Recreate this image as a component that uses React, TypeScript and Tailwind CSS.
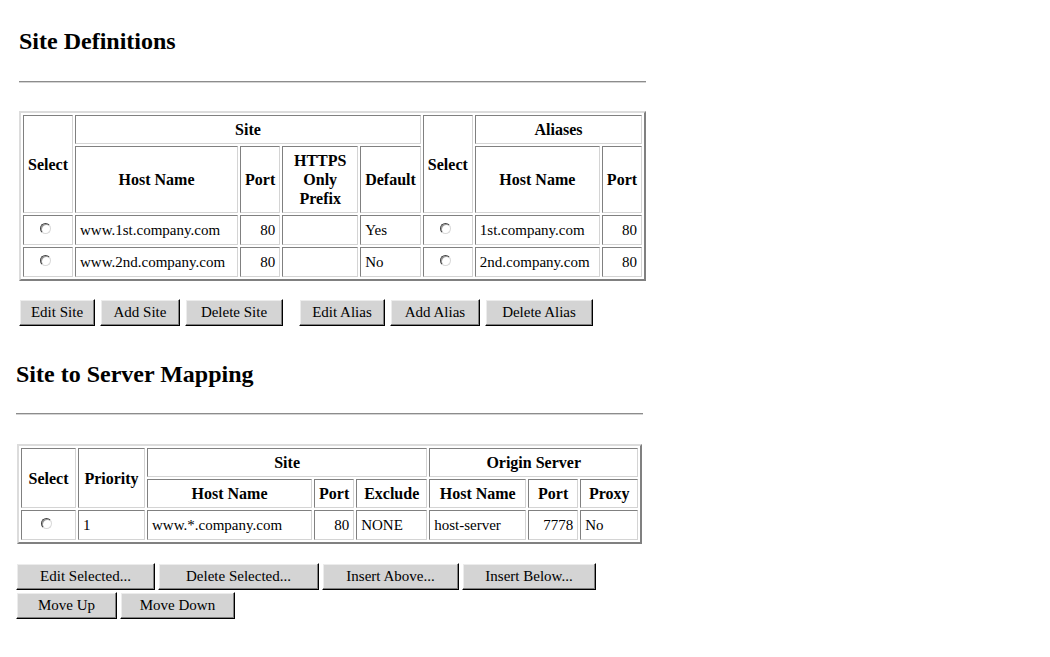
import React from 'react'

const thCls =
  'border border-t-[#808080] border-l-[#808080] border-b-[#d4d4d4] border-r-[#d4d4d4] p-[4px] font-bold text-[16px] leading-[19px] text-center align-middle'
const tdCls =
  'border border-t-[#808080] border-l-[#808080] border-b-[#d4d4d4] border-r-[#d4d4d4] px-[4px] py-0 text-[15px] leading-[19px] whitespace-nowrap align-middle h-[30px]'
const tableCls =
  'border-separate border-spacing-[2px] border-2 border-t-[#dcdcdc] border-l-[#dcdcdc] border-b-[#808080] border-r-[#808080]'
const btnCls =
  'h-[27px] bg-[#d4d4d4] border border-t-white border-l-white border-b-black border-r-black shadow-[inset_-1px_-1px_0_#808080,inset_1px_1px_0_#ececec] text-[15px] leading-[19px] text-black text-center'

function Radio() {
  return (
    <span className="inline-block align-middle mr-[5px] mb-[5px] w-[11px] h-[11px] rounded-full bg-white border border-t-[#404040] border-l-[#404040] border-b-[#d8d8d8] border-r-[#d8d8d8] shadow-[inset_1px_1px_0_#9a9a9a]" />
  )
}

function Btn({ label, w }: { label: string; w: string }) {
  return (
    <button type="button" className={`${btnCls} ${w}`}>
      {label}
    </button>
  )
}

function Rule() {
  return <div className="w-[627px] h-[2px] border-t border-t-[#8c8c8c] border-b border-b-[#d4d4d4]" />
}

export default function App() {
  const sites = [
    { host: 'www.1st.company.com', port: '80', prefix: '', def: 'Yes', alias: '1st.company.com', aport: '80' },
    { host: 'www.2nd.company.com', port: '80', prefix: '', def: 'No', alias: '2nd.company.com', aport: '80' },
  ]

  return (
    <div className="min-h-[657px] bg-white text-black font-['Liberation_Serif','Times_New_Roman',serif] pl-[16px] pt-[27px]">
      {/* Site Definitions */}
      <div className="ml-[3px]">
        <h2 className="text-[24px] font-bold leading-[28px]">Site Definitions</h2>
        <div className="mt-[26px]">
          <Rule />
        </div>

        <table className={`${tableCls} mt-[28px]`}>
          <thead>
            <tr>
              <th rowSpan={2} className={`${thCls} w-[50px]`}>Select</th>
              <th colSpan={4} className={`${thCls} h-[28px]`}>Site</th>
              <th rowSpan={2} className={`${thCls} w-[50px]`}>Select</th>
              <th colSpan={2} className={`${thCls} h-[28px]`}>Aliases</th>
            </tr>
            <tr>
              <th className={`${thCls} w-[163px]`}>Host Name</th>
              <th className={`${thCls} w-[38px]`}>Port</th>
              <th className={`${thCls} w-[76px]`}>HTTPS Only Prefix</th>
              <th className={`${thCls} w-[59px]`}>Default</th>
              <th className={`${thCls} w-[125px]`}>Host Name</th>
              <th className={`${thCls} w-[38px]`}>Port</th>
            </tr>
          </thead>
          <tbody>
            {sites.map((s) => (
              <tr key={s.host}>
                <td className={`${tdCls} text-center`}><Radio /></td>
                <td className={tdCls}>{s.host}</td>
                <td className={`${tdCls} text-right`}>{s.port}</td>
                <td className={tdCls}>{s.prefix}</td>
                <td className={tdCls}>{s.def}</td>
                <td className={`${tdCls} text-center`}><Radio /></td>
                <td className={tdCls}>{s.alias}</td>
                <td className={`${tdCls} text-right`}>{s.aport}</td>
              </tr>
            ))}
          </tbody>
        </table>

        <div className="mt-[18px] flex gap-[5px]">
          <Btn label="Edit Site" w="w-[76px]" />
          <Btn label="Add Site" w="w-[80px]" />
          <Btn label="Delete Site" w="w-[98px]" />
          <div className="w-[6px]" />
          <Btn label="Edit Alias" w="w-[86px]" />
          <Btn label="Add Alias" w="w-[90px]" />
          <Btn label="Delete Alias" w="w-[108px]" />
        </div>
      </div>

      {/* Site to Server Mapping */}
      <div className="mt-[34px]">
        <h2 className="text-[24px] font-bold leading-[28px]">Site to Server Mapping</h2>
        <div className="mt-[25px]">
          <Rule />
        </div>

        <table className={`${tableCls} mt-[29px] ml-[1px]`}>
          <thead>
            <tr>
              <th rowSpan={2} className={`${thCls} w-[55px]`}>Select</th>
              <th rowSpan={2} className={`${thCls} w-[67px]`}>Priority</th>
              <th colSpan={3} className={`${thCls} h-[28px]`}>Site</th>
              <th colSpan={3} className={`${thCls} h-[28px]`}>Origin Server</th>
            </tr>
            <tr>
              <th className={`${thCls} w-[165px] h-[29px]`}>Host Name</th>
              <th className={`${thCls} w-[40px]`}>Port</th>
              <th className={`${thCls} w-[71px]`}>Exclude</th>
              <th className={`${thCls} w-[97px]`}>Host Name</th>
              <th className={`${thCls} w-[50px]`}>Port</th>
              <th className={`${thCls} w-[58px]`}>Proxy</th>
            </tr>
          </thead>
          <tbody>
            <tr>
              <td className={`${tdCls} text-center`}><Radio /></td>
              <td className={tdCls}>1</td>
              <td className={tdCls}>www.*.company.com</td>
              <td className={`${tdCls} text-right`}>80</td>
              <td className={tdCls}>NONE</td>
              <td className={tdCls}>host-server</td>
              <td className={`${tdCls} text-right`}>7778</td>
              <td className={tdCls}>No</td>
            </tr>
          </tbody>
        </table>

        <div className="mt-[19px] flex flex-col gap-[2px]">
          <div className="flex gap-[3px]">
            <Btn label="Edit Selected..." w="w-[139px]" />
            <Btn label="Delete Selected..." w="w-[161px]" />
            <Btn label="Insert Above..." w="w-[137px]" />
            <Btn label="Insert Below..." w="w-[134px]" />
          </div>
          <div className="flex gap-[3px]">
            <Btn label="Move Up" w="w-[101px]" />
            <Btn label="Move Down" w="w-[115px]" />
          </div>
        </div>
      </div>
    </div>
  )
}
